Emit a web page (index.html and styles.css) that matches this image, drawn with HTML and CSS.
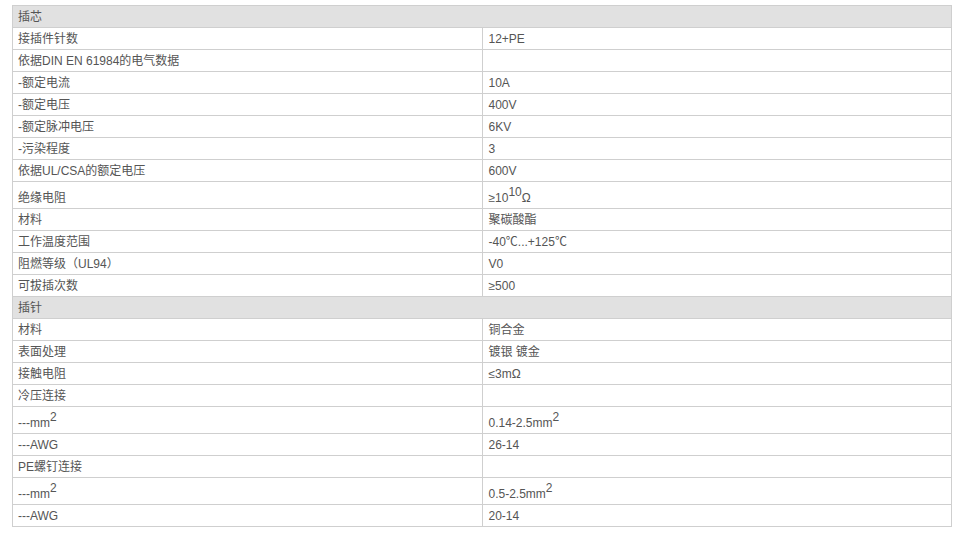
FILE: index.html
```html
<!DOCTYPE html>
<html lang="zh">
<head>
<meta charset="utf-8">
<link rel="stylesheet" href="styles.css">
</head>
<body>
<table class="spec">
  <tr class="group"><td colspan="2">插芯</td></tr>
  <tr><td class="k">接插件针数</td><td>12+PE</td></tr>
  <tr><td class="k">依据DIN EN 61984的电气数据</td><td></td></tr>
  <tr><td class="k">-额定电流</td><td>10A</td></tr>
  <tr><td class="k">-额定电压</td><td>400V</td></tr>
  <tr><td class="k">-额定脉冲电压</td><td>6KV</td></tr>
  <tr><td class="k">-污染程度</td><td>3</td></tr>
  <tr><td class="k">依据UL/CSA的额定电压</td><td>600V</td></tr>
  <tr class="tall"><td class="k">绝缘电阻</td><td>≥10<sup>10</sup>Ω</td></tr>
  <tr><td class="k">材料</td><td>聚碳酸酯</td></tr>
  <tr><td class="k">工作温度范围</td><td>-40℃...+125℃</td></tr>
  <tr><td class="k">阻燃等级（UL94）</td><td>V0</td></tr>
  <tr><td class="k">可拔插次数</td><td>≥500</td></tr>
  <tr class="group"><td colspan="2">插针</td></tr>
  <tr><td class="k">材料</td><td>铜合金</td></tr>
  <tr><td class="k">表面处理</td><td>镀银 镀金</td></tr>
  <tr><td class="k">接触电阻</td><td>≤3mΩ</td></tr>
  <tr><td class="k">冷压连接</td><td></td></tr>
  <tr class="tall"><td class="k">---mm<sup>2</sup></td><td>0.14-2.5mm<sup>2</sup></td></tr>
  <tr><td class="k">---AWG</td><td>26-14</td></tr>
  <tr><td class="k">PE螺钉连接</td><td></td></tr>
  <tr class="tall"><td class="k">---mm<sup>2</sup></td><td>0.5-2.5mm<sup>2</sup></td></tr>
  <tr><td class="k">---AWG</td><td>20-14</td></tr>
</table>
</body>
</html>
```
FILE: styles.css
```css
html, body {
  margin: 0;
  padding: 0;
  background: #fff;
}
body {
  padding: 5px 0 0 12px;
  font-family: "Liberation Sans", Arial, "Noto Sans CJK SC", sans-serif;
  font-size: 12px;
  color: #555;
}
.spec {
  border-collapse: collapse;
  width: 940px;
  table-layout: fixed;
}
.spec td {
  border: 1px solid #cfcfcf;
  height: 22px;
  padding: 0 0 0 5px;
  line-height: 14px;
  vertical-align: middle;
  white-space: nowrap;
  box-sizing: border-box;
}
.spec td.k {
  width: 468px;
}
.spec tr td:nth-child(2) {
  padding-left: 6px;
}
.spec tr.group td {
  background: #e1e1e1;
}
.spec tr.tall td {
  height: 27px;
  padding-top: 5px;
}
.spec sup {
  font-size: 12px;
  line-height: 0;
  vertical-align: 6px;
}
```
